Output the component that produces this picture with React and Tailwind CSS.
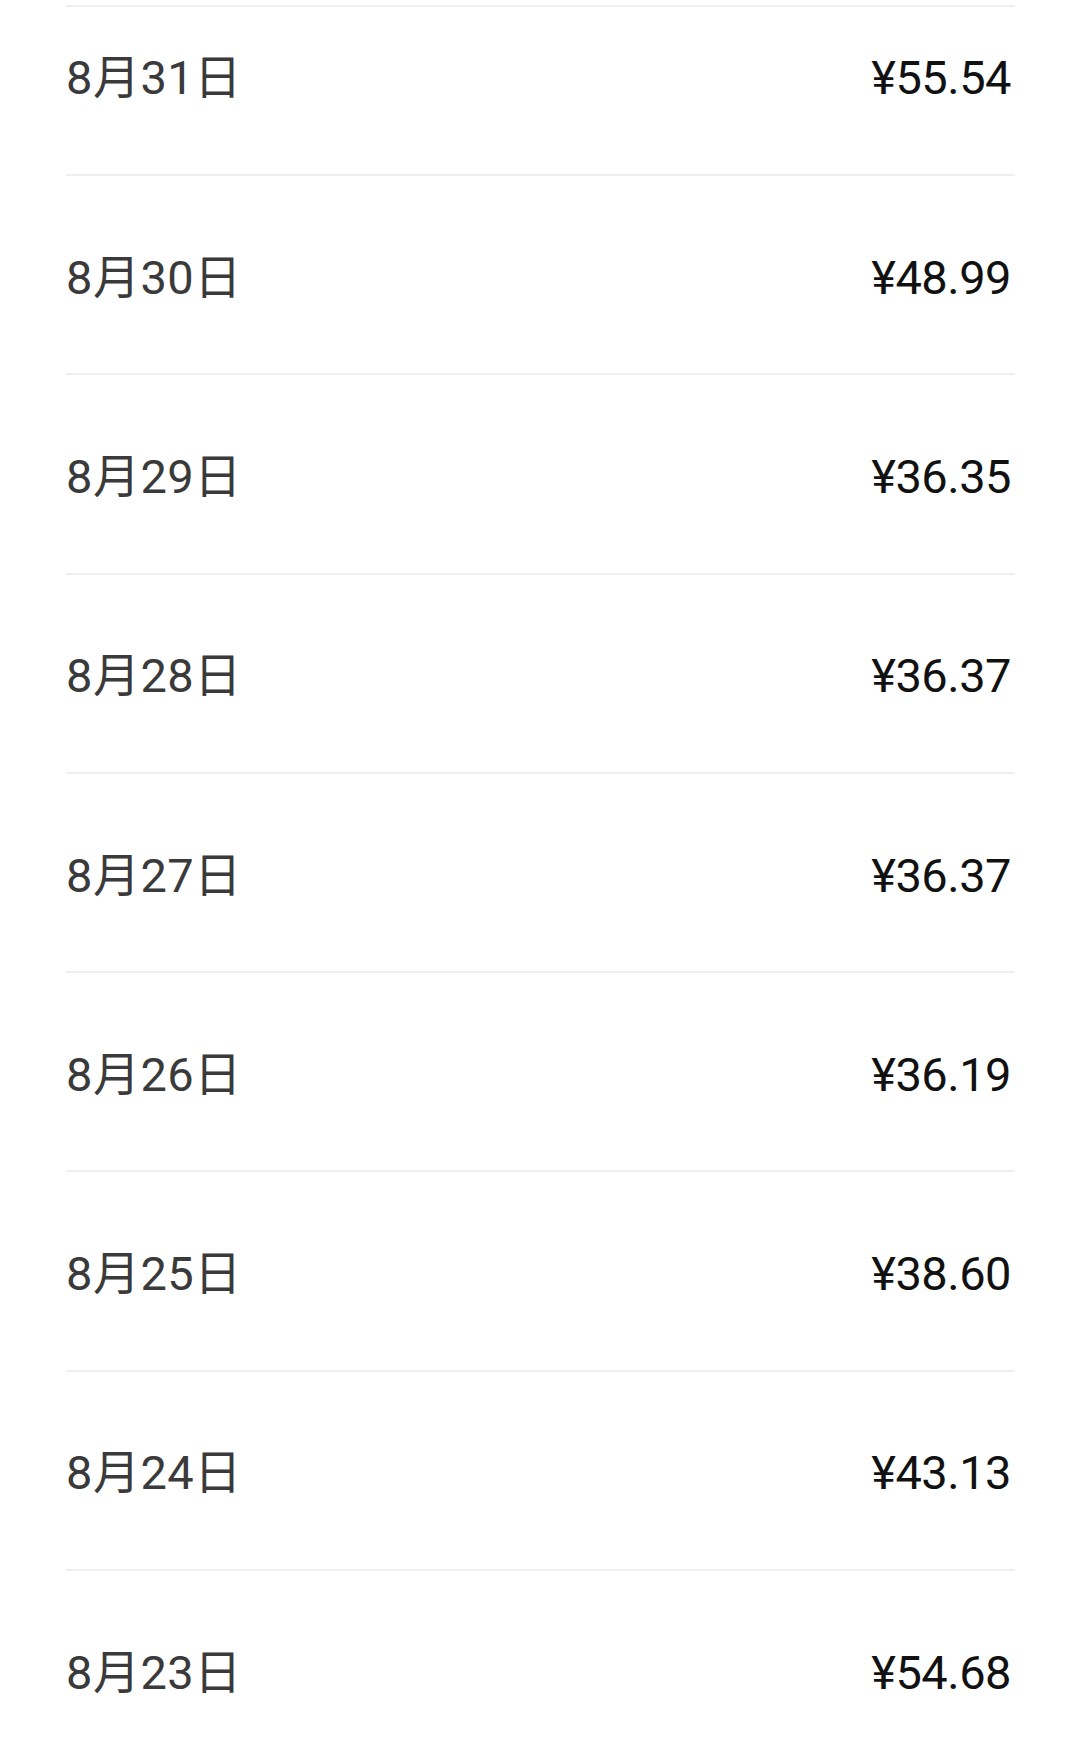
const rows = [
  { date: "8月31日", amount: "¥55.54" },
  { date: "8月30日", amount: "¥48.99" },
  { date: "8月29日", amount: "¥36.35" },
  { date: "8月28日", amount: "¥36.37" },
  { date: "8月27日", amount: "¥36.37" },
  { date: "8月26日", amount: "¥36.19" },
  { date: "8月25日", amount: "¥38.60" },
  { date: "8月24日", amount: "¥43.13" },
  { date: "8月23日", amount: "¥54.68" },
];

const font = { fontFamily: '"Roboto", "Noto Sans CJK SC", sans-serif' };

export default function App() {
  return (
    <div className="w-[1080px] h-[1761px] overflow-hidden bg-white" style={font}>
      <div className="ml-[66px] mr-[65px] mt-[5px] border-t-2 border-[#efefef]">
        {rows.map((r, i) => (
          <div
            key={r.date}
            className={
              i === 0
                ? "flex h-[169px] items-center justify-between border-b-2 border-[#efefef] pb-[26px] pr-[4px]"
                : "flex h-[199.3px] items-center justify-between border-b-2 border-[#efefef] pt-[5px] pr-[4px]"
            }
          >
            <span className="text-[47px] leading-none tracking-[0.5px] text-[#3a3a3a]">{r.date}</span>
            <span className="text-[47px] leading-none tracking-[-0.5px] text-[#111111]">{r.amount}</span>
          </div>
        ))}
      </div>
    </div>
  );
}
